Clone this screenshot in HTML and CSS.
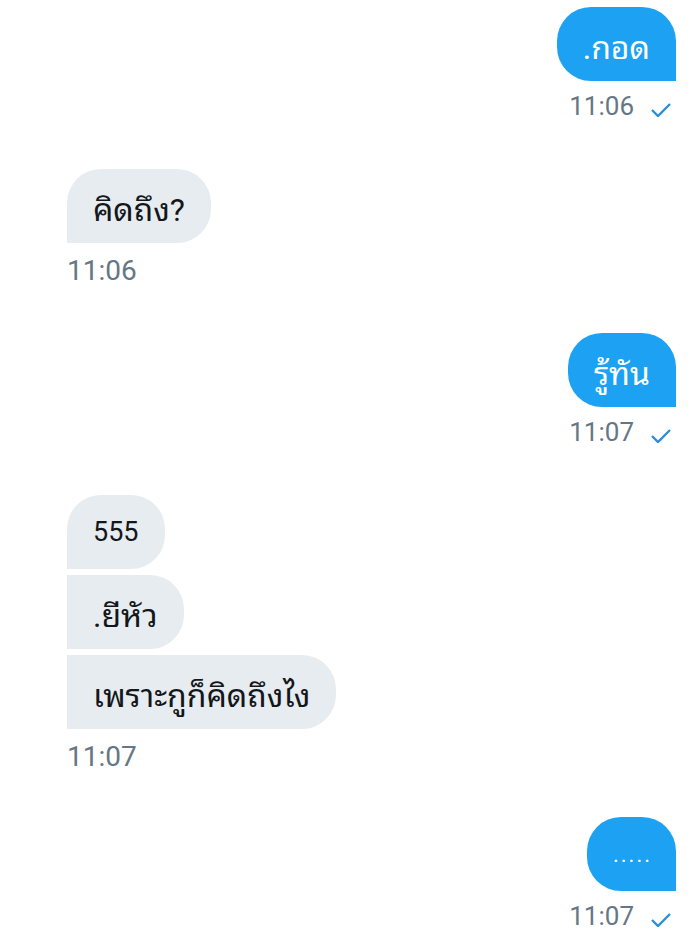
FILE: index.html
```html
<!DOCTYPE html>
<html lang="th">
<head>
  <meta charset="utf-8">
  <title>Chat</title>
  <link rel="stylesheet" href="styles.css">
</head>
<body>
  <div class="chat">

    <div class="msg msg-out">
      <div class="bubble bubble-out th">.กอด</div>
      <div class="time">11:06 <svg class="check" viewBox="0 0 20 14"><path d="M1 7 L7 13 L19 1" /></svg></div>
    </div>

    <div class="msg msg-in">
      <div class="bubble bubble-in th">คิดถึง?</div>
      <div class="time">11:06</div>
    </div>

    <div class="msg msg-out">
      <div class="bubble bubble-out th">รู้ทัน</div>
      <div class="time">11:07 <svg class="check" viewBox="0 0 20 14"><path d="M1 7 L7 13 L19 1" /></svg></div>
    </div>

    <div class="msg msg-in">
      <div class="bubble bubble-in first">555</div>
      <div class="bubble bubble-in middle th">.ยีหัว</div>
      <div class="bubble bubble-in last th">เพราะกูก็คิดถึงไง</div>
      <div class="time">11:07</div>
    </div>

    <div class="msg msg-out">
      <div class="bubble bubble-out dots">.....</div>
      <div class="time">11:07 <svg class="check" viewBox="0 0 20 14"><path d="M1 7 L7 13 L19 1" /></svg></div>
    </div>

  </div>
</body>
</html>
```

FILE: styles.css
```css
body {
  margin: 0;
  background: #fff;
  font-family: Roboto, "Noto Sans Thai Looped", "Noto Looped Thai UI", "Loma", "Garuda", "Tlwg Typo", "Norasi", "Noto Sans Thai", sans-serif;
}
.chat {
  padding: 7px 24px 0 67px;
  display: flex;
  flex-direction: column;
}
.msg {
  display: flex;
  flex-direction: column;
  gap: 6px;
}
.msg-out {
  align-items: flex-end;
  margin-bottom: 48px;
}
.msg-in {
  align-items: flex-start;
  margin-bottom: 46px;
}
.msg-in:nth-child(4) {
  margin-bottom: 44px;
}
.bubble {
  height: 74px;
  box-sizing: border-box;
  padding: 0 26px;
  display: flex;
  align-items: center;
  font-size: 27px;
  border-radius: 34px;
}
.th {
  font-size: 32px;
}
.bubble-out {
  background: #1da1f2;
  color: #fff;
  border-bottom-right-radius: 0;
}
.bubble-in {
  background: #e6ecf0;
  color: #14171a;
  border-bottom-left-radius: 0;
}
.bubble-in.middle,
.bubble-in.last {
  border-top-left-radius: 0;
}
.dots {
  font-size: 22px;
  letter-spacing: 2px;
  padding: 0 24px 0 26px;
}
.time {
  color: #657786;
  display: flex;
  align-items: center;
}
.msg-out .time {
  margin-top: 4px;
  margin-right: 5px;
  font-size: 26px;
  line-height: 30px;
  gap: 17px;
}
.msg-in .time {
  margin-top: 6px;
  font-size: 28px;
  line-height: 32px;
}
.check {
  width: 20px;
  height: 14px;
  margin-top: 7px;
  fill: none;
  stroke: #2b8fd8;
  stroke-width: 2.4;
}
```
